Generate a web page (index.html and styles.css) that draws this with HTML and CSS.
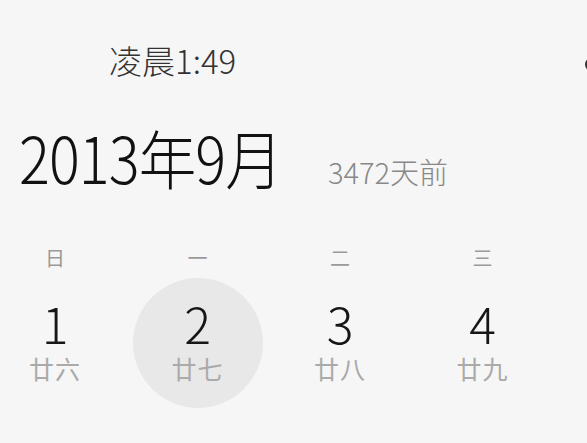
FILE: index.html
```html
<!DOCTYPE html>
<html lang="zh">
<head>
<meta charset="utf-8">
<link rel="stylesheet" href="styles.css">
</head>
<body>
<div class="screen">
  <div class="topbar">
    <div class="time">凌晨1:49</div>
    <div class="edge"></div>
  </div>
  <div class="heading">
    <span class="month">2013年9月</span>
    <span class="ago">3472天前</span>
  </div>
  <div class="week">
    <div class="day">
      <div class="wk">日</div>
      <div class="cell"><div class="num">1</div><div class="lunar">廿六</div></div>
    </div>
    <div class="day">
      <div class="wk">一</div>
      <div class="cell selected"><div class="num">2</div><div class="lunar">廿七</div></div>
    </div>
    <div class="day">
      <div class="wk">二</div>
      <div class="cell"><div class="num">3</div><div class="lunar">廿八</div></div>
    </div>
    <div class="day">
      <div class="wk">三</div>
      <div class="cell"><div class="num">4</div><div class="lunar">廿九</div></div>
    </div>
  </div>
</div>
</body>
</html>
```
FILE: styles.css
```css
* { box-sizing: border-box; }
html, body {
  margin: 0;
  padding: 0;
  background: #f6f6f6;
  overflow: hidden;
}
body {
  font-family: "Noto Sans CJK SC", "Noto Sans", sans-serif;
  width: 587px;
  height: 443px;
}
.screen {
  width: 587px;
  height: 443px;
  overflow: hidden;
}
.topbar {
  display: flex;
  justify-content: space-between;
  align-items: flex-start;
  height: 96px;
  padding: 40px 0 0 109px;
  width: 601px;
}
.time {
  font-size: 33px;
  line-height: 40px;
  color: #333;
  font-weight: 300;
}
.edge {
  width: 16px;
  height: 15px;
  border: 2px solid #333;
  border-radius: 50%;
  margin-top: 17px;
}
.heading {
  display: flex;
  align-items: baseline;
  padding: 20px 0 0 19px;
  height: 142px;
}
.month {
  display: inline-block;
  font-size: 64px;
  line-height: 80px;
  font-weight: 300;
  color: #111;
  letter-spacing: -1px;
  width: 260px;
  white-space: nowrap;
  transform: scaleX(0.9);
  transform-origin: left center;
}
.ago {
  font-size: 29px;
  color: #888;
  margin-left: 49px;
  font-weight: 300;
}
.week {
  display: grid;
  grid-template-columns: repeat(4, 130px);
  column-gap: 12.5px;
  margin-left: -10px;
}
.day {
  display: flex;
  flex-direction: column;
  align-items: center;
}
.wk {
  font-size: 20px;
  line-height: 30px;
  color: #9a9a9a;
  height: 40px;
  padding-top: 5px;
}
.cell {
  width: 130px;
  height: 130px;
  border-radius: 50%;
  display: flex;
  flex-direction: column;
  align-items: center;
  padding-top: 14px;
}
.cell.selected {
  background: #e8e8e8;
}
.num {
  font-size: 50px;
  line-height: 60px;
  font-weight: 300;
  color: #161616;
}
.lunar {
  font-size: 25px;
  line-height: 32px;
  color: #aaa;
  letter-spacing: 1px;
}
```
